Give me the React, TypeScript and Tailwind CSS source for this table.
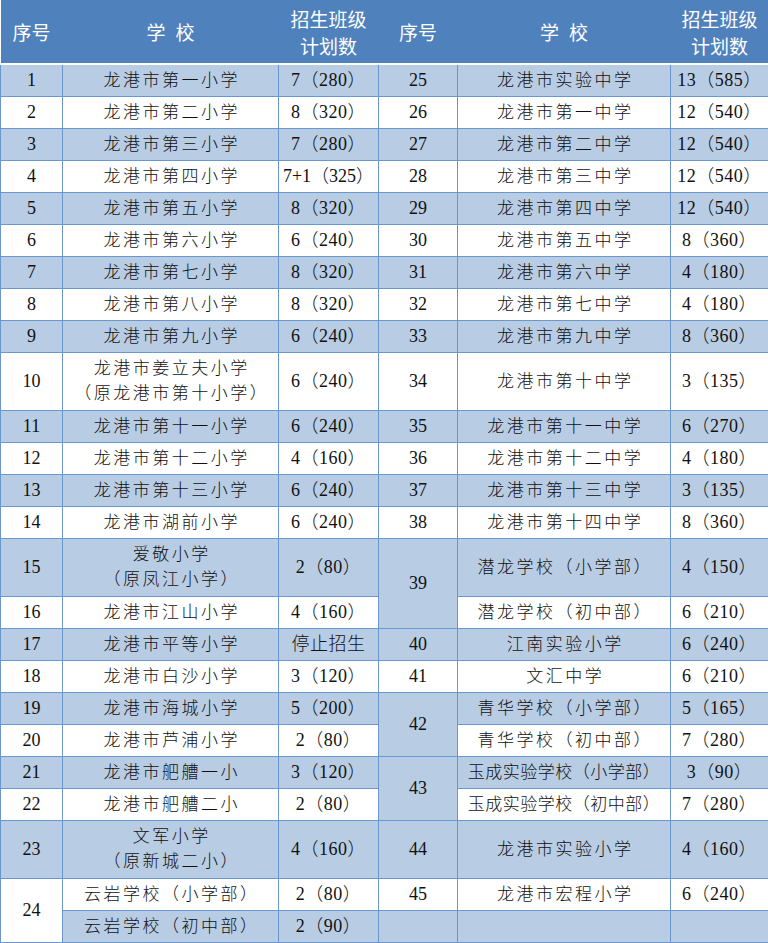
import React from 'react';

type Cell = { lines: string[]; span?: number; tight?: boolean } | null;

interface Row {
  tall?: boolean;
  cells: Cell[]; // seq, school, count, seq, school, count
}

const c = (text: string, span?: number, tight?: boolean): Cell => ({
  lines: text.split('/'),
  span,
  tight,
});

const rows: Row[] = [
  { cells: [c('1'), c('龙港市第一小学'), c('7（280）'), c('25'), c('龙港市实验中学'), c('13（585）')] },
  { cells: [c('2'), c('龙港市第二小学'), c('8（320）'), c('26'), c('龙港市第一中学'), c('12（540）')] },
  { cells: [c('3'), c('龙港市第三小学'), c('7（280）'), c('27'), c('龙港市第二中学'), c('12（540）')] },
  { cells: [c('4'), c('龙港市第四小学'), c('7+1（325）', undefined, true), c('28'), c('龙港市第三中学'), c('12（540）')] },
  { cells: [c('5'), c('龙港市第五小学'), c('8（320）'), c('29'), c('龙港市第四中学'), c('12（540）')] },
  { cells: [c('6'), c('龙港市第六小学'), c('6（240）'), c('30'), c('龙港市第五中学'), c('8（360）')] },
  { cells: [c('7'), c('龙港市第七小学'), c('8（320）'), c('31'), c('龙港市第六中学'), c('4（180）')] },
  { cells: [c('8'), c('龙港市第八小学'), c('8（320）'), c('32'), c('龙港市第七中学'), c('4（180）')] },
  { cells: [c('9'), c('龙港市第九小学'), c('6（240）'), c('33'), c('龙港市第九中学'), c('8（360）')] },
  {
    tall: true,
    cells: [c('10'), c('龙港市姜立夫小学/（原龙港市第十小学）'), c('6（240）'), c('34'), c('龙港市第十中学'), c('3（135）')],
  },
  { cells: [c('11'), c('龙港市第十一小学'), c('6（240）'), c('35'), c('龙港市第十一中学'), c('6（270）')] },
  { cells: [c('12'), c('龙港市第十二小学'), c('4（160）'), c('36'), c('龙港市第十二中学'), c('4（180）')] },
  { cells: [c('13'), c('龙港市第十三小学'), c('6（240）'), c('37'), c('龙港市第十三中学'), c('3（135）')] },
  { cells: [c('14'), c('龙港市湖前小学'), c('6（240）'), c('38'), c('龙港市第十四中学'), c('8（360）')] },
  {
    tall: true,
    cells: [c('15'), c('爱敬小学/（原凤江小学）'), c('2（80）'), c('39', 2), c('潜龙学校（小学部）'), c('4（150）')],
  },
  { cells: [c('16'), c('龙港市江山小学'), c('4（160）'), null, c('潜龙学校（初中部）'), c('6（210）')] },
  { cells: [c('17'), c('龙港市平等小学'), c('停止招生'), c('40'), c('江南实验小学'), c('6（240）')] },
  { cells: [c('18'), c('龙港市白沙小学'), c('3（120）'), c('41'), c('文汇中学'), c('6（210）')] },
  { cells: [c('19'), c('龙港市海城小学'), c('5（200）'), c('42', 2), c('青华学校（小学部）'), c('5（165）')] },
  { cells: [c('20'), c('龙港市芦浦小学'), c('2（80）'), null, c('青华学校（初中部）'), c('7（280）')] },
  { cells: [c('21'), c('龙港市舥艚一小'), c('3（120）'), c('43', 2), c('玉成实验学校（小学部）', undefined, true), c('3（90）')] },
  { cells: [c('22'), c('龙港市舥艚二小'), c('2（80）'), null, c('玉成实验学校（初中部）', undefined, true), c('7（280）')] },
  {
    tall: true,
    cells: [c('23'), c('文军小学/（原新城二小）'), c('4（160）'), c('44'), c('龙港市实验小学'), c('4（160）')],
  },
  { cells: [c('24', 2), c('云岩学校（小学部）'), c('2（80）'), c('45'), c('龙港市宏程小学'), c('6（240）')] },
  { cells: [null, c('云岩学校（初中部）'), c('2（90）'), c(''), c(''), c('')] },
];

const headers: string[][] = [
  ['序号'],
  ['学', '校'],
  ['招生班级', '计划数'],
  ['序号'],
  ['学', '校'],
  ['招生班级', '计划数'],
];

export default function App() {
  return (
    <div className="w-[768px] h-[943px] overflow-hidden bg-white">
      <table
        className="w-[768px] table-fixed border-collapse text-[#111]"
        style={{ fontFamily: "'Liberation Serif', 'Noto Sans CJK SC', serif" }}
      >
        <colgroup>
          <col className="w-[62px]" />
          <col className="w-[216px]" />
          <col className="w-[100px]" />
          <col className="w-[79px]" />
          <col className="w-[213px]" />
          <col className="w-[98px]" />
        </colgroup>
        <thead>
          <tr className="bg-[#4f81bd] text-white">
            {headers.map((h, i) => (
              <th
                key={i}
                className="h-[64px] p-0 border-b-2 border-white text-[19px] font-normal leading-[27px]"
                style={{ fontFamily: "'Noto Sans CJK SC', 'Noto Sans', sans-serif" }}
              >
                {i === 1 || i === 4 ? (
                  <div className="flex justify-center gap-[10px]">
                    <span>{h[0]}</span>
                    <span>{h[1]}</span>
                  </div>
                ) : (
                  h.map((line, j) => <div key={j}>{line}</div>)
                )}
              </th>
            ))}
          </tr>
        </thead>
        <tbody>
          {rows.map((row, i) => (
            <tr key={i} className={i % 2 === 0 ? 'bg-[#b8cce4]' : 'bg-white'}>
              {row.cells.map((cell, j) => {
                if (!cell) return null;
                const isSeq = j === 0 || j === 3;
                const isSchool = j === 1 || j === 4;
                return (
                  <td
                    key={j}
                    rowSpan={cell.span}
                    className={`p-0 border border-[#6b97cf] text-center align-middle whitespace-nowrap font-light ${
                      row.tall ? 'h-[58px]' : 'h-[32px]'
                    } ${
                      isSeq
                        ? 'text-[18px]'
                        : isSchool
                          ? cell.tight
                            ? 'text-[17px] tracking-[0.5px] leading-[25px]'
                            : 'text-[17px] tracking-[2.5px] pl-[2.5px] leading-[25px]'
                          : cell.tight
                            ? 'text-[18px] tracking-[0px]'
                            : 'text-[18px] tracking-[0.5px]'
                    }`}
                  >
                    {cell.lines.map((line, k) => (
                      <div key={k}>{line}</div>
                    ))}
                  </td>
                );
              })}
            </tr>
          ))}
        </tbody>
      </table>
    </div>
  );
}
